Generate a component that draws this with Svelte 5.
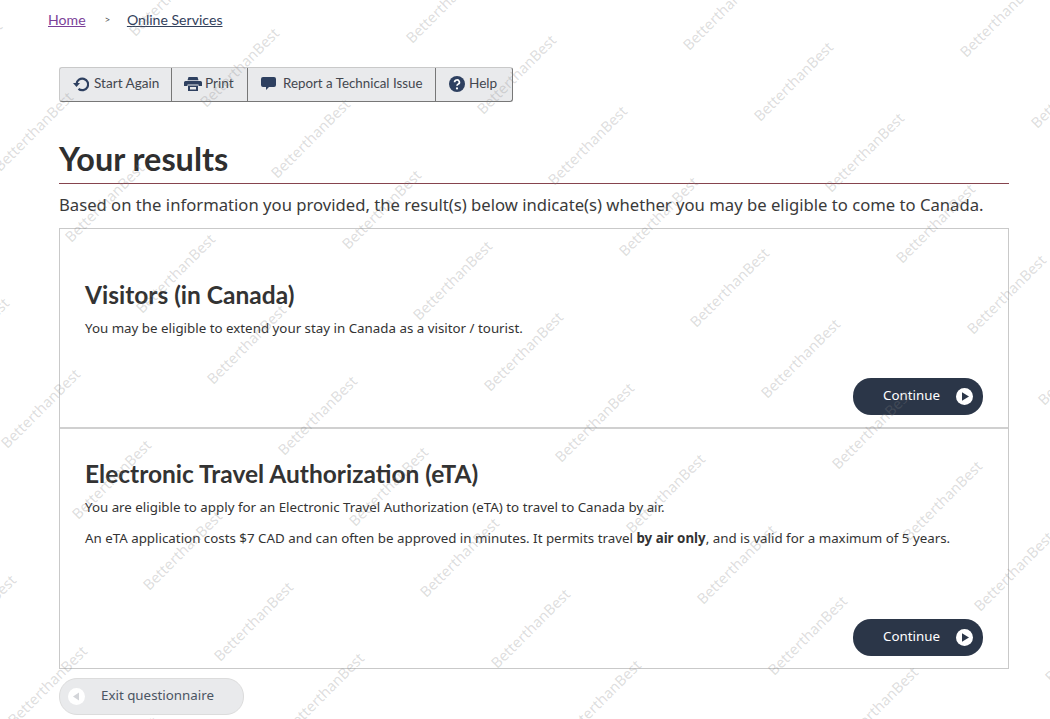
<script>
  const a = [277, 7];
  const b = [71, 71];
  const origin = [516, 74];
  const marks = [];
  for (let i = -6; i < 7; i++) {
    for (let j = -4; j < 12; j++) {
      const x = origin[0] + i * a[0] + j * b[0];
      const y = origin[1] + i * a[1] + j * b[1];
      if (x > -60 && x < 1110 && y > -60 && y < 780) marks.push({ x, y });
    }
  }
</script>

<div class="page">
  <nav class="crumbs">
    <a class="visited" href="#home">Home</a>
    <span class="sep">&gt;</span>
    <a href="#services">Online Services</a>
  </nav>

  <main class="main">
    <div class="toolbar">
      <button class="tool t1">
        <svg width="16" height="16" viewBox="0 0 16 16"><path d="M3.500 8a5.800 5.800 0 1 1 2 4.800" fill="none" stroke="#2e4060" stroke-width="2.200"/><path d="M0 7 L7 7 L3.500 11 Z" fill="#2e4060"/></svg>
        <span>Start Again</span>
      </button>
      <button class="tool t2">
        <svg width="18" height="16" viewBox="0 0 18 16"><path d="M4.500 1h9l1 3.200h-11zM1.500 5h15a1.500 1.500 0 0 1 1.500 1.500V10h-3.500V8.500h-11V10H0V6.500A1.500 1.500 0 0 1 1.500 5zM4 9.500h10V15H4z" fill="#2e4060"/><path d="M6 11h6v2.500H6z" fill="#e9eaec"/></svg>
        <span>Print</span>
      </button>
      <button class="tool t3">
        <svg width="15" height="14" viewBox="0 0 15 14"><path d="M2 0h11a2 2 0 0 1 2 2v6a2 2 0 0 1-2 2H8l-3 3v-3H2a2 2 0 0 1-2-2V2a2 2 0 0 1 2-2z" fill="#2e4060"/></svg>
        <span>Report a Technical Issue</span>
      </button>
      <button class="tool t4">
        <svg width="16" height="16" viewBox="0 0 16 16"><circle cx="8" cy="8" r="8" fill="#2e4060"/><path d="M5.600 6.200a2.400 2.200 0 1 1 3.600 1.900c-.8.500-1.200.8-1.200 1.700" fill="none" stroke="#fff" stroke-width="1.700"/><circle cx="8" cy="12.400" r="1.100" fill="#fff"/></svg>
        <span>Help</span>
      </button>
    </div>

    <h1>Your results</h1>
    <p class="intro">Based on the information you provided, the result(s) below indicate(s) whether you may be eligible to come to Canada.</p>

    <div class="cards">
      <section class="card first">
        <h2>Visitors (in Canada)</h2>
        <p>You may be eligible to extend your stay in Canada as a visitor / tourist.</p>
        <div class="actions">
          <button class="continue">
            <span>Continue</span>
            <svg width="17" height="17" viewBox="0 0 17 17"><circle cx="8.500" cy="8.500" r="8.500" fill="#fff"/><path d="M6 4.200 L13 8.500 L6 12.800 Z" fill="#2b3648"/></svg>
          </button>
        </div>
      </section>
      <section class="card second">
        <h2>Electronic Travel Authorization (eTA)</h2>
        <p>You are eligible to apply for an Electronic Travel Authorization (eTA) to travel to Canada by air.</p>
        <p>An eTA application costs $7 CAD and can often be approved in minutes. It permits travel <strong>by air only</strong>, and is valid for a maximum of 5 years.</p>
        <div class="actions">
          <button class="continue">
            <span>Continue</span>
            <svg width="17" height="17" viewBox="0 0 17 17"><circle cx="8.500" cy="8.500" r="8.500" fill="#fff"/><path d="M6 4.200 L13 8.500 L6 12.800 Z" fill="#2b3648"/></svg>
          </button>
        </div>
      </section>
    </div>

    <button class="exit">
      <svg width="17" height="17" viewBox="0 0 17 17"><circle cx="8.500" cy="8.500" r="8.500" fill="#fff"/><path d="M11 4.500 L5 8.500 L11 12.500 Z" fill="#d3d5d9"/></svg>
      <span>Exit questionnaire</span>
    </button>
  </main>

  <div class="watermarks" aria-hidden="true">
    {#each marks as m}
      <span class="mark" style="left:{m.x}px;top:{m.y}px">BetterthanBest</span>
    {/each}
  </div>
</div>

<style>
  :global(body) {
    margin: 0;
    background: #fff;
    overflow: hidden;
  }
  .page {
    position: relative;
    width: 1050px;
    height: 719px;
    overflow: hidden;
    font-family: "Noto Sans", sans-serif;
    color: #333;
  }
  .crumbs {
    display: flex;
    align-items: center;
    padding: 9px 0 0 48px;
    height: 21px;
    font-family: "Lato", sans-serif;
    font-size: 14.100px;
    line-height: 19px;
  }
  .crumbs a {
    color: #33415c;
    text-decoration: underline;
  }
  .crumbs a.visited {
    color: #7b3f98;
  }
  .sep {
    margin: 0 16.500px 0 19px;
    font-size: 10px;
    color: #555;
  }
  .main {
    padding: 37px 41px 0 59px;
  }
  .toolbar {
    display: inline-flex;
    height: 35px;
    box-sizing: border-box;
    background: #e9eaec;
    border: 1px solid #c9c9c9;
    border-right-color: #777;
    border-bottom-color: #777;
    border-radius: 3px;
  }
  .tool {
    display: flex;
    align-items: center;
    box-sizing: border-box;
    padding: 0 0 3px;
    background: none;
    border: 0;
    border-right: 1px solid #777;
    font-family: "Lato", sans-serif;
    font-size: 13.600px;
    color: #43474f;
    white-space: nowrap;
  }
  .tool svg {
    margin-top: 1px;
  }
  .t1 { width: 112px; gap: 5px; padding-left: 13px; }
  .t2 { width: 76px; gap: 3px; padding-left: 12px; }
  .t3 { width: 188px; gap: 7px; padding-left: 13px; }
  .t3 span { font-size: 13.330px; }
  .t4 { width: 76px; gap: 4px; padding-left: 13px; border-right: 0; }
  h1 {
    margin: 37px 0 0;
    height: 44px;
    font-family: "Lato", sans-serif;
    font-weight: 700;
    font-size: 32.400px;
    line-height: 39px;
    color: #2f2f2f;
    border-bottom: 1px solid #86444e;
  }
  .intro {
    margin: 10px 0 12px;
    font-size: 16.670px;
    line-height: 22px;
    color: #3a3a3a;
    white-space: nowrap;
  }
  .cards {
    border: 1px solid #c9c9c9;
    height: 441px;
    box-sizing: border-box;
    display: flex;
    flex-direction: column;
  }
  .card {
    display: flex;
    flex-direction: column;
    padding: 0 25px;
    box-sizing: border-box;
  }
  .card.first {
    height: 200px;
    padding-top: 50px;
    border-bottom: 2px solid #d0d0d0;
  }
  .card.second {
    flex: 1;
    padding-top: 29px;
  }
  h2 {
    margin: 0 0 9px;
    font-family: "Lato", sans-serif;
    font-weight: 700;
    font-size: 24.500px;
    line-height: 31px;
    color: #333;
  }
  .card p {
    margin: 0 0 13px;
    font-size: 13.330px;
    line-height: 18px;
    color: #333;
  }
  .actions {
    margin-top: auto;
    display: flex;
    justify-content: flex-end;
    padding-bottom: 12px;
  }
  .continue {
    display: flex;
    align-items: center;
    justify-content: flex-end;
    gap: 16px;
    width: 130px;
    height: 37px;
    padding: 0 10px 0 0;
    background: #2b3648;
    border: 0;
    border-radius: 18px;
    color: #fff;
    font-family: "Noto Sans", sans-serif;
    font-size: 13.330px;
  }
  .continue span, .exit span {
    margin-top: -3px;
  }
  .exit {
    display: flex;
    align-items: center;
    gap: 16px;
    margin-top: 9px;
    width: 185px;
    height: 37px;
    padding: 0 0 0 8px;
    box-sizing: border-box;
    background: #e9eaec;
    border: 1px solid #dcdcdc;
    border-radius: 18px;
    color: #4b5563;
    font-family: "Noto Sans", sans-serif;
    font-size: 13.330px;
  }
  .watermarks {
    position: absolute;
    inset: 0;
    pointer-events: none;
  }
  .mark {
    position: absolute;
    transform: translate(-50%, -50%) rotate(-45deg);
    font-family: "Noto Sans", sans-serif;
    font-size: 14.700px;
    line-height: 18px;
    color: rgba(128, 128, 128, 0.27);
    white-space: nowrap;
  }
</style>
